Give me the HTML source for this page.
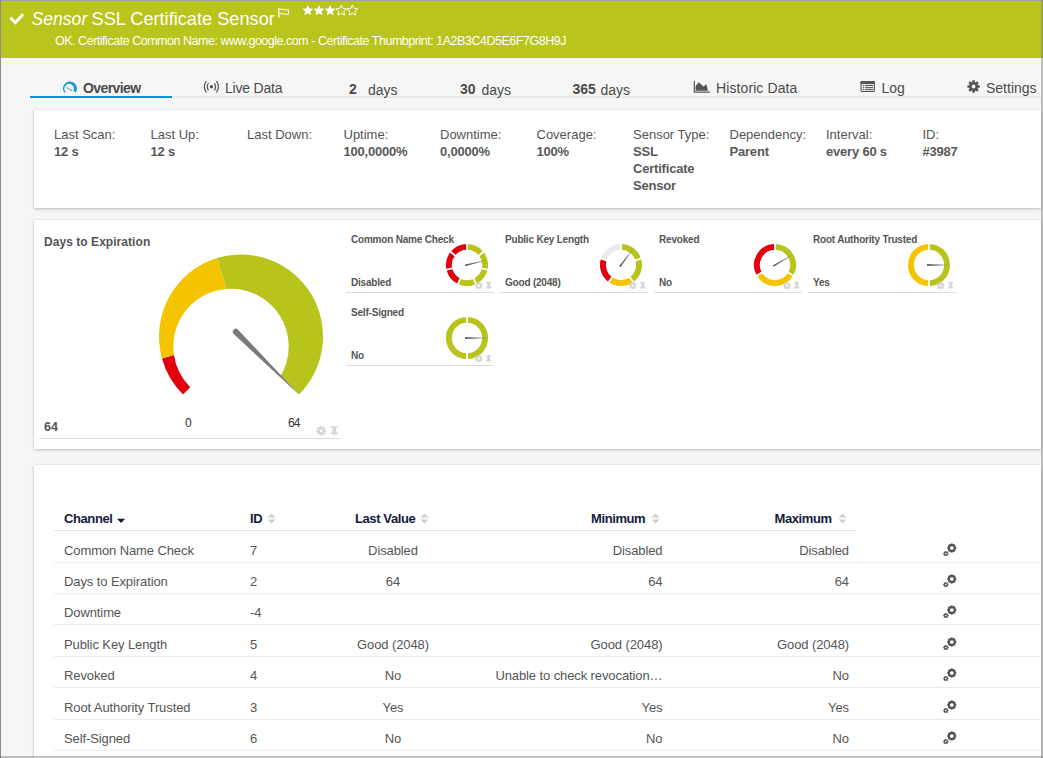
<!DOCTYPE html><html><head><meta charset="utf-8"><style>
*{box-sizing:border-box}
html,body{margin:0;padding:0}
body{width:1043px;height:758px;overflow:hidden;background:#f6f6f6;font-family:"Liberation Sans", sans-serif;position:relative;color:#4d4d4d}
.a{position:absolute;white-space:nowrap}
.panel{position:absolute;left:34px;width:1007px;background:#fff;box-shadow:0 1px 3px rgba(0,0,0,0.22),0 0 1px rgba(0,0,0,0.10)}
.lbl{font-size:13px;color:#555;letter-spacing:0px}
.val{font-size:13px;font-weight:bold;color:#595959;letter-spacing:-0.2px}
.gt{font-size:10px;font-weight:bold;color:#555;letter-spacing:-0.2px}
.th{font-size:13px;font-weight:bold;color:#131a3c;letter-spacing:-0.4px}
.td{font-size:13px;color:#555;letter-spacing:-0.1px}
</style></head><body>

<div class="a" style="left:0;top:0;width:1043px;height:58px;background:#b9c41c"></div>
<svg class="a" style="left:8px;top:11px" width="18" height="16" viewBox="0 0 18 16"><path d="M2.3,6.6 L7.3,11.6 L15.2,3.3" fill="none" stroke="#fff" stroke-width="2.9"/></svg>
<div class="a" style="left:31.5px;top:6px;font-size:17.6px;line-height:26px;color:#fff;font-style:italic">Sensor</div>
<div class="a" style="left:91.5px;top:6px;font-size:18.2px;line-height:26px;color:#fff">SSL Certificate Sensor</div>
<svg class="a" style="left:278px;top:7px" width="13" height="12" viewBox="0 0 13 12"><path d="M0.9,1 V10.7" stroke="#fff" stroke-width="1.3"/><path d="M2,2.3 C5,1.4 6.5,3.6 10.6,2.8 V7 C6.5,8 5,5.8 2,6.8" fill="none" stroke="#fff" stroke-width="1"/></svg>
<svg class="a" style="left:0;top:0" width="400" height="30"><polygon points="307.80,5.00 309.39,8.42 313.13,8.87 310.37,11.43 311.09,15.13 307.80,13.30 304.51,15.13 305.23,11.43 302.47,8.87 306.21,8.42" fill="#fff"/><polygon points="318.95,5.00 320.54,8.42 324.28,8.87 321.52,11.43 322.24,15.13 318.95,13.30 315.66,15.13 316.38,11.43 313.62,8.87 317.36,8.42" fill="#fff"/><polygon points="330.10,5.00 331.69,8.42 335.43,8.87 332.67,11.43 333.39,15.13 330.10,13.30 326.81,15.13 327.53,11.43 324.77,8.87 328.51,8.42" fill="#fff"/><polygon points="341.25,5.00 342.84,8.42 346.58,8.87 343.82,11.43 344.54,15.13 341.25,13.30 337.96,15.13 338.68,11.43 335.92,8.87 339.66,8.42" fill="none" stroke="#fff" stroke-width="1"/><polygon points="352.40,5.00 353.99,8.42 357.73,8.87 354.97,11.43 355.69,15.13 352.40,13.30 349.11,15.13 349.83,11.43 347.07,8.87 350.81,8.42" fill="none" stroke="#fff" stroke-width="1"/></svg>
<div class="a" style="left:55px;top:33.5px;font-size:12.5px;line-height:15px;color:#fff;letter-spacing:-0.475px">OK. Certificate Common Name: www.google.com - Certificate Thumbprint: 1A2B3C4D5E6F7G8H9J</div>
<div class="a" style="left:0;top:0;width:1043px;height:1px;background:#9f9fae;z-index:10"></div>
<div class="a" style="left:0;top:0;width:1px;height:758px;background:#8a8a8a;z-index:10"></div>
<div class="a" style="left:1041px;top:0;width:2px;height:758px;background:rgba(120,120,120,0.45);z-index:10"></div>
<div class="a" style="left:0;top:756px;width:1043px;height:2px;background:rgba(120,120,120,0.45);z-index:10"></div>
<div class="a" style="left:173px;top:96px;width:868px;height:2px;background:#e9e9e9"></div>
<div class="a" style="left:30px;top:96px;width:142px;height:2px;background:#0096d6"></div>
<svg class="a" style="left:61px;top:80px" width="18" height="14" viewBox="0 0 18 14"><path d="M3.48,12.81 A7,7 0 1 1 14.66,12.61 L12.27,10.87 A4.7,4.7 0 1 0 4.65,11.90 Z" fill="#1a9ad6"/><path d="M5.1,7.5 L5.5,6.9 L11.1,10.6 L10.5,11.3 Z" fill="#1a9ad6"/></svg>
<div class="a" style="left:83px;top:80px;font-size:14px;line-height:16px;font-weight:bold;color:#4a4a4a;letter-spacing:-0.6px">Overview</div>
<svg class="a" style="left:203px;top:81px" width="17" height="12" viewBox="0 0 17 12"><circle cx="8.4" cy="5.7" r="1.75" fill="#555"/><path d="M5.5,2.0 A6.6,6.6 0 0 0 5.5,9.4 M11.3,2.0 A6.6,6.6 0 0 1 11.3,9.4" fill="none" stroke="#555" stroke-width="1.15"/><path d="M3.4,-0.1 A10,10 0 0 0 3.4,11.5 M13.4,-0.1 A10,10 0 0 1 13.4,11.5" fill="none" stroke="#555" stroke-width="1.15"/></svg>
<div class="a" style="left:225px;top:80px;font-size:14px;line-height:16px;color:#4a4a4a;letter-spacing:-0.2px">Live Data</div>
<div class="a" style="left:349px;top:81px;font-size:14px;line-height:16px;font-weight:bold;color:#4a4a4a">2</div>
<div class="a" style="left:368px;top:82px;font-size:14px;line-height:16px;color:#4a4a4a">days</div>
<div class="a" style="left:460px;top:81px;font-size:14px;line-height:16px;font-weight:bold;color:#4a4a4a">30</div>
<div class="a" style="left:481.5px;top:82px;font-size:14px;line-height:16px;color:#4a4a4a">days</div>
<div class="a" style="left:572.5px;top:81px;font-size:14px;line-height:16px;font-weight:bold;color:#4a4a4a">365</div>
<div class="a" style="left:600.5px;top:82px;font-size:14px;line-height:16px;color:#4a4a4a">days</div>
<svg class="a" style="left:693px;top:81px" width="17" height="12" viewBox="0 0 17 12"><path d="M1.3,0 V11.2 H16.8" fill="none" stroke="#555" stroke-width="1.2"/><path d="M2.6,9.8 V5 L5.8,1.3 L10.4,5.6 L13.4,3.2 L15,9.8 Z" fill="#555"/></svg>
<div class="a" style="left:716px;top:80px;font-size:14px;line-height:16px;color:#4a4a4a;letter-spacing:0.1px">Historic Data</div>
<svg class="a" style="left:860px;top:81px" width="16" height="12" viewBox="0 0 16 12"><rect x="1.05" y="0.55" width="13.3" height="9.9" rx="1" fill="#e4e4e4" stroke="#555" stroke-width="1.1"/><rect x="0.5" y="0" width="14.4" height="3" rx="1" fill="#555"/><path d="M2.9,4.5 h1.2 M2.9,6.6 h1.2 M2.9,8.6 h1.2 M5.1,4.5 h7.8 M5.1,6.6 h7.8 M5.1,8.6 h7.8" stroke="#555" stroke-width="1"/></svg>
<div class="a" style="left:881.5px;top:80px;font-size:14px;line-height:16px;color:#4a4a4a">Log</div>
<svg class="a" style="left:967.1px;top:80.2px" width="14" height="14" viewBox="0 0 14 14"><g fill="#555"><circle cx="6.6" cy="6.5" r="4.5"/><rect x="5.3" y="0.3" width="2.6" height="12.4" rx="0.4" transform="rotate(0 6.6 6.5)"/><rect x="5.3" y="0.3" width="2.6" height="12.4" rx="0.4" transform="rotate(45 6.6 6.5)"/><rect x="5.3" y="0.3" width="2.6" height="12.4" rx="0.4" transform="rotate(90 6.6 6.5)"/><rect x="5.3" y="0.3" width="2.6" height="12.4" rx="0.4" transform="rotate(135 6.6 6.5)"/></g><circle cx="6.6" cy="6.5" r="1.9" fill="#f6f6f6"/></svg>
<div class="a" style="left:986px;top:80px;font-size:14px;line-height:16px;color:#4a4a4a">Settings</div>
<div class="panel" style="top:110px;height:98px"></div>
<div class="a lbl" style="left:54px;top:126px;line-height:17px">Last Scan:</div>
<div class="a val" style="left:54px;top:143px;line-height:17px">12 s</div>
<div class="a lbl" style="left:150.5px;top:126px;line-height:17px">Last Up:</div>
<div class="a val" style="left:150.5px;top:143px;line-height:17px">12 s</div>
<div class="a lbl" style="left:247px;top:126px;line-height:17px">Last Down:</div>
<div class="a lbl" style="left:343.5px;top:126px;line-height:17px">Uptime:</div>
<div class="a val" style="left:343.5px;top:143px;line-height:17px">100,0000%</div>
<div class="a lbl" style="left:440px;top:126px;line-height:17px">Downtime:</div>
<div class="a val" style="left:440px;top:143px;line-height:17px">0,0000%</div>
<div class="a lbl" style="left:536.5px;top:126px;line-height:17px">Coverage:</div>
<div class="a val" style="left:536.5px;top:143px;line-height:17px">100%</div>
<div class="a lbl" style="left:633px;top:126px;line-height:17px">Sensor Type:</div>
<div class="a val" style="left:633px;top:143px;line-height:17px">SSL</div>
<div class="a val" style="left:633px;top:160px;line-height:17px">Certificate</div>
<div class="a val" style="left:633px;top:177px;line-height:17px">Sensor</div>
<div class="a lbl" style="left:729.5px;top:126px;line-height:17px">Dependency:</div>
<div class="a val" style="left:729.5px;top:143px;line-height:17px">Parent</div>
<div class="a lbl" style="left:826px;top:126px;line-height:17px">Interval:</div>
<div class="a val" style="left:826px;top:143px;line-height:17px">every 60 s</div>
<div class="a lbl" style="left:922.5px;top:126px;line-height:17px">ID:</div>
<div class="a val" style="left:922.5px;top:143px;line-height:17px">#3987</div>
<div class="panel" style="top:220px;height:229px"></div>
<div class="a" style="left:44px;top:234px;font-size:12px;line-height:16px;font-weight:bold;color:#555;letter-spacing:0.05px">Days to Expiration</div>
<svg class="a" style="left:0;top:0" width="360" height="450"><path d="M183.02,394.48 A82,82 0 0 1 161.98,358.41 L173.94,355.10 A57.7,57.7 0 0 0 190.20,387.30 Z" fill="#e2000f"/><path d="M161.98,358.41 A82,82 0 0 1 217.16,258.04 L226.56,288.97 A57.7,57.7 0 0 0 173.94,355.10 Z" fill="#f5c400"/><path d="M217.16,258.04 A82,82 0 0 1 298.98,394.48 L280.56,376.06 A57.7,57.7 0 0 0 226.56,288.97 Z" fill="#b8c41c"/><path d="M233.7,334.1 A3.1,3.1 0 0 1 238.1,329.7 L299.4,394.9 Z" fill="#7a7a7a"/></svg>
<div class="a" style="left:185px;top:415.5px;font-size:12px;line-height:14px;color:#333">0</div>
<div class="a" style="left:288px;top:415.5px;font-size:12px;line-height:14px;color:#333;letter-spacing:-0.8px">64</div>
<div class="a" style="left:44px;top:420px;font-size:12.5px;line-height:14px;font-weight:bold;color:#555">64</div>
<svg class="a" style="left:0;top:0;overflow:visible" width="1" height="1"><g transform="translate(321.3,430.8) scale(1.0)" fill="#d6d6d6"><circle r="3.7"/><rect x="-1.1" y="-5" width="2.2" height="10" transform="rotate(0)"/><rect x="-1.1" y="-5" width="2.2" height="10" transform="rotate(45)"/><rect x="-1.1" y="-5" width="2.2" height="10" transform="rotate(90)"/><rect x="-1.1" y="-5" width="2.2" height="10" transform="rotate(135)"/><circle r="1.5" fill="#fff"/><path d="M9.2,-4.6 h7 v1.6 h-1.4 v3.6 l1.7,1.8 v1.0 h-2.9 l-0.6,3.5 l-0.6,-3.5 h-2.9 v-1.0 l1.7,-1.8 v-3.6 h-1.4z"/></g></svg>
<div class="a" style="left:39px;top:438px;width:301px;height:1px;background:#dcdcdc"></div>
<div class="a gt" style="left:351px;top:234px;line-height:12px">Common Name Check</div>
<div class="a gt" style="left:351px;top:277px;line-height:12px">Disabled</div>
<div class="a" style="left:346px;top:292px;width:148px;height:1px;background:#dcdcdc"></div>
<div class="a gt" style="left:505px;top:234px;line-height:12px">Public Key Length</div>
<div class="a gt" style="left:505px;top:277px;line-height:12px">Good (2048)</div>
<div class="a" style="left:500px;top:292px;width:148px;height:1px;background:#dcdcdc"></div>
<div class="a gt" style="left:659px;top:234px;line-height:12px">Revoked</div>
<div class="a gt" style="left:659px;top:277px;line-height:12px">No</div>
<div class="a" style="left:654px;top:292px;width:148px;height:1px;background:#dcdcdc"></div>
<div class="a gt" style="left:813px;top:234px;line-height:12px">Root Authority Trusted</div>
<div class="a gt" style="left:813px;top:277px;line-height:12px">Yes</div>
<div class="a" style="left:808px;top:292px;width:148px;height:1px;background:#dcdcdc"></div>
<div class="a gt" style="left:351px;top:307px;line-height:12px">Self-Signed</div>
<div class="a gt" style="left:351px;top:350px;line-height:12px">No</div>
<div class="a" style="left:346px;top:365px;width:148px;height:1px;background:#dcdcdc"></div>
<svg class="a" style="left:0;top:0" width="1043" height="450"><path d="M467.00,246.90 A18.1,18.1 0 0 1 481.15,253.71" fill="none" stroke="#b8c41c" stroke-width="5.9"/><path d="M481.15,253.71 A18.1,18.1 0 0 1 484.65,269.03" fill="none" stroke="#b8c41c" stroke-width="5.9"/><path d="M484.65,269.03 A18.1,18.1 0 0 1 474.85,281.31" fill="none" stroke="#b8c41c" stroke-width="5.9"/><path d="M474.85,281.31 A18.1,18.1 0 0 1 459.15,281.31" fill="none" stroke="#b8c41c" stroke-width="5.9"/><path d="M459.15,281.31 A18.1,18.1 0 0 1 449.35,269.03" fill="none" stroke="#e2000f" stroke-width="5.9"/><path d="M449.35,269.03 A18.1,18.1 0 0 1 452.85,253.71" fill="none" stroke="#e2000f" stroke-width="5.9"/><path d="M452.85,253.71 A18.1,18.1 0 0 1 467.00,246.90" fill="none" stroke="#e2000f" stroke-width="5.9"/><line x1="467.00" y1="253.00" x2="467.00" y2="241.00" stroke="#fff" stroke-width="1.8"/><line x1="476.38" y1="257.52" x2="485.76" y2="250.04" stroke="#fff" stroke-width="1.8"/><line x1="478.70" y1="267.67" x2="490.40" y2="270.34" stroke="#fff" stroke-width="1.8"/><line x1="472.21" y1="275.81" x2="477.41" y2="286.62" stroke="#fff" stroke-width="1.8"/><line x1="461.79" y1="275.81" x2="456.59" y2="286.62" stroke="#fff" stroke-width="1.8"/><line x1="455.30" y1="267.67" x2="443.60" y2="270.34" stroke="#fff" stroke-width="1.8"/><line x1="457.62" y1="257.52" x2="448.24" y2="250.04" stroke="#fff" stroke-width="1.8"/><path d="M465.28,266.36 L487.38,259.92 L464.84,264.61 Z" fill="#666"/><path d="M621.00,246.90 A18.1,18.1 0 0 1 638.21,259.41" fill="none" stroke="#b8c41c" stroke-width="5.9"/><path d="M638.21,259.41 A18.1,18.1 0 0 1 631.64,279.64" fill="none" stroke="#b8c41c" stroke-width="5.9"/><path d="M631.64,279.64 A18.1,18.1 0 0 1 610.36,279.64" fill="none" stroke="#f5c400" stroke-width="5.9"/><path d="M610.36,279.64 A18.1,18.1 0 0 1 603.79,259.41" fill="none" stroke="#e2000f" stroke-width="5.9"/><path d="M603.79,259.41 A18.1,18.1 0 0 1 621.00,246.90" fill="none" stroke="#ebebeb" stroke-width="5.9"/><line x1="621.00" y1="253.00" x2="621.00" y2="241.00" stroke="#fff" stroke-width="1.8"/><line x1="632.41" y1="261.29" x2="643.83" y2="257.58" stroke="#fff" stroke-width="1.8"/><line x1="628.05" y1="274.71" x2="635.11" y2="284.42" stroke="#fff" stroke-width="1.8"/><line x1="613.95" y1="274.71" x2="606.89" y2="284.42" stroke="#fff" stroke-width="1.8"/><line x1="609.59" y1="261.29" x2="598.17" y2="257.58" stroke="#fff" stroke-width="1.8"/><path d="M620.52,267.14 L633.64,248.23 L619.08,266.06 Z" fill="#666"/><path d="M775.00,246.90 A18.1,18.1 0 0 1 790.68,274.05" fill="none" stroke="#b8c41c" stroke-width="5.9"/><path d="M790.68,274.05 A18.1,18.1 0 0 1 759.32,274.05" fill="none" stroke="#f5c400" stroke-width="5.9"/><path d="M759.32,274.05 A18.1,18.1 0 0 1 775.00,246.90" fill="none" stroke="#e2000f" stroke-width="5.9"/><line x1="775.00" y1="253.00" x2="775.00" y2="241.00" stroke="#fff" stroke-width="1.8"/><line x1="785.39" y1="271.00" x2="795.78" y2="277.00" stroke="#fff" stroke-width="1.8"/><line x1="764.61" y1="271.00" x2="754.22" y2="277.00" stroke="#fff" stroke-width="1.8"/><path d="M773.72,266.78 L793.19,254.50 L772.82,265.22 Z" fill="#666"/><path d="M929.00,246.90 A18.1,18.1 0 0 1 929.00,283.10" fill="none" stroke="#b8c41c" stroke-width="5.9"/><path d="M929.00,283.10 A18.1,18.1 0 0 1 929.00,246.90" fill="none" stroke="#f5c400" stroke-width="5.9"/><line x1="929.00" y1="253.00" x2="929.00" y2="241.00" stroke="#fff" stroke-width="1.8"/><line x1="929.00" y1="277.00" x2="929.00" y2="289.00" stroke="#fff" stroke-width="1.8"/><path d="M927.00,265.90 L950.00,265.00 L927.00,264.10 Z" fill="#666"/><path d="M467.00,319.90 A18.1,18.1 0 0 1 467.00,356.10" fill="none" stroke="#b8c41c" stroke-width="5.9"/><path d="M467.00,356.10 A18.1,18.1 0 0 1 467.00,319.90" fill="none" stroke="#b8c41c" stroke-width="5.9"/><line x1="467.00" y1="326.00" x2="467.00" y2="314.00" stroke="#fff" stroke-width="1.8"/><line x1="467.00" y1="350.00" x2="467.00" y2="362.00" stroke="#fff" stroke-width="1.8"/><path d="M465.00,338.90 L488.00,338.00 L465.00,337.10 Z" fill="#666"/></svg>
<svg class="a" style="left:0;top:0;overflow:visible" width="1" height="1"><g transform="translate(478.8,285.6) scale(0.76)" fill="#d6d6d6"><circle r="3.7"/><rect x="-1.1" y="-5" width="2.2" height="10" transform="rotate(0)"/><rect x="-1.1" y="-5" width="2.2" height="10" transform="rotate(45)"/><rect x="-1.1" y="-5" width="2.2" height="10" transform="rotate(90)"/><rect x="-1.1" y="-5" width="2.2" height="10" transform="rotate(135)"/><circle r="1.5" fill="#fff"/><path d="M9.2,-4.6 h7 v1.6 h-1.4 v3.6 l1.7,1.8 v1.0 h-2.9 l-0.6,3.5 l-0.6,-3.5 h-2.9 v-1.0 l1.7,-1.8 v-3.6 h-1.4z"/></g></svg>
<svg class="a" style="left:0;top:0;overflow:visible" width="1" height="1"><g transform="translate(632.8,285.6) scale(0.76)" fill="#d6d6d6"><circle r="3.7"/><rect x="-1.1" y="-5" width="2.2" height="10" transform="rotate(0)"/><rect x="-1.1" y="-5" width="2.2" height="10" transform="rotate(45)"/><rect x="-1.1" y="-5" width="2.2" height="10" transform="rotate(90)"/><rect x="-1.1" y="-5" width="2.2" height="10" transform="rotate(135)"/><circle r="1.5" fill="#fff"/><path d="M9.2,-4.6 h7 v1.6 h-1.4 v3.6 l1.7,1.8 v1.0 h-2.9 l-0.6,3.5 l-0.6,-3.5 h-2.9 v-1.0 l1.7,-1.8 v-3.6 h-1.4z"/></g></svg>
<svg class="a" style="left:0;top:0;overflow:visible" width="1" height="1"><g transform="translate(786.8,285.6) scale(0.76)" fill="#d6d6d6"><circle r="3.7"/><rect x="-1.1" y="-5" width="2.2" height="10" transform="rotate(0)"/><rect x="-1.1" y="-5" width="2.2" height="10" transform="rotate(45)"/><rect x="-1.1" y="-5" width="2.2" height="10" transform="rotate(90)"/><rect x="-1.1" y="-5" width="2.2" height="10" transform="rotate(135)"/><circle r="1.5" fill="#fff"/><path d="M9.2,-4.6 h7 v1.6 h-1.4 v3.6 l1.7,1.8 v1.0 h-2.9 l-0.6,3.5 l-0.6,-3.5 h-2.9 v-1.0 l1.7,-1.8 v-3.6 h-1.4z"/></g></svg>
<svg class="a" style="left:0;top:0;overflow:visible" width="1" height="1"><g transform="translate(940.8,285.6) scale(0.76)" fill="#d6d6d6"><circle r="3.7"/><rect x="-1.1" y="-5" width="2.2" height="10" transform="rotate(0)"/><rect x="-1.1" y="-5" width="2.2" height="10" transform="rotate(45)"/><rect x="-1.1" y="-5" width="2.2" height="10" transform="rotate(90)"/><rect x="-1.1" y="-5" width="2.2" height="10" transform="rotate(135)"/><circle r="1.5" fill="#fff"/><path d="M9.2,-4.6 h7 v1.6 h-1.4 v3.6 l1.7,1.8 v1.0 h-2.9 l-0.6,3.5 l-0.6,-3.5 h-2.9 v-1.0 l1.7,-1.8 v-3.6 h-1.4z"/></g></svg>
<svg class="a" style="left:0;top:0;overflow:visible" width="1" height="1"><g transform="translate(478.8,358.6) scale(0.76)" fill="#d6d6d6"><circle r="3.7"/><rect x="-1.1" y="-5" width="2.2" height="10" transform="rotate(0)"/><rect x="-1.1" y="-5" width="2.2" height="10" transform="rotate(45)"/><rect x="-1.1" y="-5" width="2.2" height="10" transform="rotate(90)"/><rect x="-1.1" y="-5" width="2.2" height="10" transform="rotate(135)"/><circle r="1.5" fill="#fff"/><path d="M9.2,-4.6 h7 v1.6 h-1.4 v3.6 l1.7,1.8 v1.0 h-2.9 l-0.6,3.5 l-0.6,-3.5 h-2.9 v-1.0 l1.7,-1.8 v-3.6 h-1.4z"/></g></svg>
<div class="panel" style="top:465px;height:300px"></div>
<div class="a" style="left:54px;top:530px;width:803px;height:1px;background:#e6e6e6"></div>
<div class="a th" style="left:64px;top:510.5px;line-height:16px">Channel</div>
<svg class="a" style="left:117px;top:518px" width="9" height="6" viewBox="0 0 9 6"><path d="M0,0.8 H8.2 L4.1,5.0Z" fill="#131a3c"/></svg>
<div class="a th" style="left:250px;top:510.5px;line-height:16px">ID</div>
<svg class="a" style="left:267px;top:513px" width="9" height="11" viewBox="0 0 9 11"><path d="M0.5,4.5 L4.5,0.5 L8.5,4.5Z M0.5,6.5 L4.5,10.5 L8.5,6.5Z" fill="#cfcfcf"/></svg>
<div class="a th" style="left:355px;top:510.5px;line-height:16px">Last Value</div>
<svg class="a" style="left:420px;top:513px" width="9" height="11" viewBox="0 0 9 11"><path d="M0.5,4.5 L4.5,0.5 L8.5,4.5Z M0.5,6.5 L4.5,10.5 L8.5,6.5Z" fill="#cfcfcf"/></svg>
<div class="a th" style="left:591px;top:510.5px;line-height:16px">Minimum</div>
<svg class="a" style="left:651px;top:513px" width="9" height="11" viewBox="0 0 9 11"><path d="M0.5,4.5 L4.5,0.5 L8.5,4.5Z M0.5,6.5 L4.5,10.5 L8.5,6.5Z" fill="#cfcfcf"/></svg>
<div class="a th" style="left:774.5px;top:510.5px;line-height:16px">Maximum</div>
<svg class="a" style="left:837.5px;top:513px" width="9" height="11" viewBox="0 0 9 11"><path d="M0.5,4.5 L4.5,0.5 L8.5,4.5Z M0.5,6.5 L4.5,10.5 L8.5,6.5Z" fill="#cfcfcf"/></svg>
<div class="a" style="left:54px;top:562px;width:987px;height:1px;background:#ececec"></div>
<div class="a td" style="left:64px;top:543px;line-height:16px">Common Name Check</div>
<div class="a td" style="left:250px;top:543px;line-height:16px">7</div>
<div class="a td" style="left:293px;width:200px;text-align:center;top:543px;line-height:16px">Disabled</div>
<div class="a td" style="left:462.5px;width:200px;text-align:right;top:543px;line-height:16px">Disabled</div>
<div class="a td" style="left:649px;width:200px;text-align:right;top:543px;line-height:16px">Disabled</div>
<svg class="a" style="left:943px;top:543px" width="14" height="13" viewBox="0 0 14 13"><circle cx="8.8" cy="5" r="3.1" fill="none" stroke="#555" stroke-width="2.2"/><rect x="8.1" y="0.4" width="1.4" height="9.2" fill="#555" transform="rotate(0 8.8 5)"/><rect x="8.1" y="0.4" width="1.4" height="9.2" fill="#555" transform="rotate(45 8.8 5)"/><rect x="8.1" y="0.4" width="1.4" height="9.2" fill="#555" transform="rotate(90 8.8 5)"/><rect x="8.1" y="0.4" width="1.4" height="9.2" fill="#555" transform="rotate(135 8.8 5)"/><circle cx="8.8" cy="5" r="1.85" fill="#fff"/><circle cx="2.8" cy="10.6" r="1.9" fill="#555"/><rect x="2.25" y="7.9" width="1.1" height="5.4" fill="#555" transform="rotate(0 2.8 10.6)"/><rect x="2.25" y="7.9" width="1.1" height="5.4" fill="#555" transform="rotate(45 2.8 10.6)"/><rect x="2.25" y="7.9" width="1.1" height="5.4" fill="#555" transform="rotate(90 2.8 10.6)"/><rect x="2.25" y="7.9" width="1.1" height="5.4" fill="#555" transform="rotate(135 2.8 10.6)"/><circle cx="2.8" cy="10.6" r="0.8" fill="#fff"/></svg>
<div class="a" style="left:54px;top:593px;width:987px;height:1px;background:#ececec"></div>
<div class="a td" style="left:64px;top:574px;line-height:16px">Days to Expiration</div>
<div class="a td" style="left:250px;top:574px;line-height:16px">2</div>
<div class="a td" style="left:293px;width:200px;text-align:center;top:574px;line-height:16px">64</div>
<div class="a td" style="left:462.5px;width:200px;text-align:right;top:574px;line-height:16px">64</div>
<div class="a td" style="left:649px;width:200px;text-align:right;top:574px;line-height:16px">64</div>
<svg class="a" style="left:943px;top:574px" width="14" height="13" viewBox="0 0 14 13"><circle cx="8.8" cy="5" r="3.1" fill="none" stroke="#555" stroke-width="2.2"/><rect x="8.1" y="0.4" width="1.4" height="9.2" fill="#555" transform="rotate(0 8.8 5)"/><rect x="8.1" y="0.4" width="1.4" height="9.2" fill="#555" transform="rotate(45 8.8 5)"/><rect x="8.1" y="0.4" width="1.4" height="9.2" fill="#555" transform="rotate(90 8.8 5)"/><rect x="8.1" y="0.4" width="1.4" height="9.2" fill="#555" transform="rotate(135 8.8 5)"/><circle cx="8.8" cy="5" r="1.85" fill="#fff"/><circle cx="2.8" cy="10.6" r="1.9" fill="#555"/><rect x="2.25" y="7.9" width="1.1" height="5.4" fill="#555" transform="rotate(0 2.8 10.6)"/><rect x="2.25" y="7.9" width="1.1" height="5.4" fill="#555" transform="rotate(45 2.8 10.6)"/><rect x="2.25" y="7.9" width="1.1" height="5.4" fill="#555" transform="rotate(90 2.8 10.6)"/><rect x="2.25" y="7.9" width="1.1" height="5.4" fill="#555" transform="rotate(135 2.8 10.6)"/><circle cx="2.8" cy="10.6" r="0.8" fill="#fff"/></svg>
<div class="a" style="left:54px;top:624px;width:987px;height:1px;background:#ececec"></div>
<div class="a td" style="left:64px;top:605px;line-height:16px">Downtime</div>
<div class="a td" style="left:250px;top:605px;line-height:16px">-4</div>
<div class="a td" style="left:293px;width:200px;text-align:center;top:605px;line-height:16px"></div>
<div class="a td" style="left:462.5px;width:200px;text-align:right;top:605px;line-height:16px"></div>
<div class="a td" style="left:649px;width:200px;text-align:right;top:605px;line-height:16px"></div>
<svg class="a" style="left:943px;top:605px" width="14" height="13" viewBox="0 0 14 13"><circle cx="8.8" cy="5" r="3.1" fill="none" stroke="#555" stroke-width="2.2"/><rect x="8.1" y="0.4" width="1.4" height="9.2" fill="#555" transform="rotate(0 8.8 5)"/><rect x="8.1" y="0.4" width="1.4" height="9.2" fill="#555" transform="rotate(45 8.8 5)"/><rect x="8.1" y="0.4" width="1.4" height="9.2" fill="#555" transform="rotate(90 8.8 5)"/><rect x="8.1" y="0.4" width="1.4" height="9.2" fill="#555" transform="rotate(135 8.8 5)"/><circle cx="8.8" cy="5" r="1.85" fill="#fff"/><circle cx="2.8" cy="10.6" r="1.9" fill="#555"/><rect x="2.25" y="7.9" width="1.1" height="5.4" fill="#555" transform="rotate(0 2.8 10.6)"/><rect x="2.25" y="7.9" width="1.1" height="5.4" fill="#555" transform="rotate(45 2.8 10.6)"/><rect x="2.25" y="7.9" width="1.1" height="5.4" fill="#555" transform="rotate(90 2.8 10.6)"/><rect x="2.25" y="7.9" width="1.1" height="5.4" fill="#555" transform="rotate(135 2.8 10.6)"/><circle cx="2.8" cy="10.6" r="0.8" fill="#fff"/></svg>
<div class="a" style="left:54px;top:656px;width:987px;height:1px;background:#ececec"></div>
<div class="a td" style="left:64px;top:637px;line-height:16px">Public Key Length</div>
<div class="a td" style="left:250px;top:637px;line-height:16px">5</div>
<div class="a td" style="left:293px;width:200px;text-align:center;top:637px;line-height:16px">Good (2048)</div>
<div class="a td" style="left:462.5px;width:200px;text-align:right;top:637px;line-height:16px">Good (2048)</div>
<div class="a td" style="left:649px;width:200px;text-align:right;top:637px;line-height:16px">Good (2048)</div>
<svg class="a" style="left:943px;top:637px" width="14" height="13" viewBox="0 0 14 13"><circle cx="8.8" cy="5" r="3.1" fill="none" stroke="#555" stroke-width="2.2"/><rect x="8.1" y="0.4" width="1.4" height="9.2" fill="#555" transform="rotate(0 8.8 5)"/><rect x="8.1" y="0.4" width="1.4" height="9.2" fill="#555" transform="rotate(45 8.8 5)"/><rect x="8.1" y="0.4" width="1.4" height="9.2" fill="#555" transform="rotate(90 8.8 5)"/><rect x="8.1" y="0.4" width="1.4" height="9.2" fill="#555" transform="rotate(135 8.8 5)"/><circle cx="8.8" cy="5" r="1.85" fill="#fff"/><circle cx="2.8" cy="10.6" r="1.9" fill="#555"/><rect x="2.25" y="7.9" width="1.1" height="5.4" fill="#555" transform="rotate(0 2.8 10.6)"/><rect x="2.25" y="7.9" width="1.1" height="5.4" fill="#555" transform="rotate(45 2.8 10.6)"/><rect x="2.25" y="7.9" width="1.1" height="5.4" fill="#555" transform="rotate(90 2.8 10.6)"/><rect x="2.25" y="7.9" width="1.1" height="5.4" fill="#555" transform="rotate(135 2.8 10.6)"/><circle cx="2.8" cy="10.6" r="0.8" fill="#fff"/></svg>
<div class="a" style="left:54px;top:687px;width:987px;height:1px;background:#ececec"></div>
<div class="a td" style="left:64px;top:668px;line-height:16px">Revoked</div>
<div class="a td" style="left:250px;top:668px;line-height:16px">4</div>
<div class="a td" style="left:293px;width:200px;text-align:center;top:668px;line-height:16px">No</div>
<div class="a td" style="left:462.5px;width:200px;text-align:right;top:668px;line-height:16px">Unable to check revocation…</div>
<div class="a td" style="left:649px;width:200px;text-align:right;top:668px;line-height:16px">No</div>
<svg class="a" style="left:943px;top:668px" width="14" height="13" viewBox="0 0 14 13"><circle cx="8.8" cy="5" r="3.1" fill="none" stroke="#555" stroke-width="2.2"/><rect x="8.1" y="0.4" width="1.4" height="9.2" fill="#555" transform="rotate(0 8.8 5)"/><rect x="8.1" y="0.4" width="1.4" height="9.2" fill="#555" transform="rotate(45 8.8 5)"/><rect x="8.1" y="0.4" width="1.4" height="9.2" fill="#555" transform="rotate(90 8.8 5)"/><rect x="8.1" y="0.4" width="1.4" height="9.2" fill="#555" transform="rotate(135 8.8 5)"/><circle cx="8.8" cy="5" r="1.85" fill="#fff"/><circle cx="2.8" cy="10.6" r="1.9" fill="#555"/><rect x="2.25" y="7.9" width="1.1" height="5.4" fill="#555" transform="rotate(0 2.8 10.6)"/><rect x="2.25" y="7.9" width="1.1" height="5.4" fill="#555" transform="rotate(45 2.8 10.6)"/><rect x="2.25" y="7.9" width="1.1" height="5.4" fill="#555" transform="rotate(90 2.8 10.6)"/><rect x="2.25" y="7.9" width="1.1" height="5.4" fill="#555" transform="rotate(135 2.8 10.6)"/><circle cx="2.8" cy="10.6" r="0.8" fill="#fff"/></svg>
<div class="a" style="left:54px;top:719px;width:987px;height:1px;background:#ececec"></div>
<div class="a td" style="left:64px;top:700px;line-height:16px">Root Authority Trusted</div>
<div class="a td" style="left:250px;top:700px;line-height:16px">3</div>
<div class="a td" style="left:293px;width:200px;text-align:center;top:700px;line-height:16px">Yes</div>
<div class="a td" style="left:462.5px;width:200px;text-align:right;top:700px;line-height:16px">Yes</div>
<div class="a td" style="left:649px;width:200px;text-align:right;top:700px;line-height:16px">Yes</div>
<svg class="a" style="left:943px;top:700px" width="14" height="13" viewBox="0 0 14 13"><circle cx="8.8" cy="5" r="3.1" fill="none" stroke="#555" stroke-width="2.2"/><rect x="8.1" y="0.4" width="1.4" height="9.2" fill="#555" transform="rotate(0 8.8 5)"/><rect x="8.1" y="0.4" width="1.4" height="9.2" fill="#555" transform="rotate(45 8.8 5)"/><rect x="8.1" y="0.4" width="1.4" height="9.2" fill="#555" transform="rotate(90 8.8 5)"/><rect x="8.1" y="0.4" width="1.4" height="9.2" fill="#555" transform="rotate(135 8.8 5)"/><circle cx="8.8" cy="5" r="1.85" fill="#fff"/><circle cx="2.8" cy="10.6" r="1.9" fill="#555"/><rect x="2.25" y="7.9" width="1.1" height="5.4" fill="#555" transform="rotate(0 2.8 10.6)"/><rect x="2.25" y="7.9" width="1.1" height="5.4" fill="#555" transform="rotate(45 2.8 10.6)"/><rect x="2.25" y="7.9" width="1.1" height="5.4" fill="#555" transform="rotate(90 2.8 10.6)"/><rect x="2.25" y="7.9" width="1.1" height="5.4" fill="#555" transform="rotate(135 2.8 10.6)"/><circle cx="2.8" cy="10.6" r="0.8" fill="#fff"/></svg>
<div class="a" style="left:54px;top:750px;width:987px;height:1px;background:#ececec"></div>
<div class="a td" style="left:64px;top:731px;line-height:16px">Self-Signed</div>
<div class="a td" style="left:250px;top:731px;line-height:16px">6</div>
<div class="a td" style="left:293px;width:200px;text-align:center;top:731px;line-height:16px">No</div>
<div class="a td" style="left:462.5px;width:200px;text-align:right;top:731px;line-height:16px">No</div>
<div class="a td" style="left:649px;width:200px;text-align:right;top:731px;line-height:16px">No</div>
<svg class="a" style="left:943px;top:731px" width="14" height="13" viewBox="0 0 14 13"><circle cx="8.8" cy="5" r="3.1" fill="none" stroke="#555" stroke-width="2.2"/><rect x="8.1" y="0.4" width="1.4" height="9.2" fill="#555" transform="rotate(0 8.8 5)"/><rect x="8.1" y="0.4" width="1.4" height="9.2" fill="#555" transform="rotate(45 8.8 5)"/><rect x="8.1" y="0.4" width="1.4" height="9.2" fill="#555" transform="rotate(90 8.8 5)"/><rect x="8.1" y="0.4" width="1.4" height="9.2" fill="#555" transform="rotate(135 8.8 5)"/><circle cx="8.8" cy="5" r="1.85" fill="#fff"/><circle cx="2.8" cy="10.6" r="1.9" fill="#555"/><rect x="2.25" y="7.9" width="1.1" height="5.4" fill="#555" transform="rotate(0 2.8 10.6)"/><rect x="2.25" y="7.9" width="1.1" height="5.4" fill="#555" transform="rotate(45 2.8 10.6)"/><rect x="2.25" y="7.9" width="1.1" height="5.4" fill="#555" transform="rotate(90 2.8 10.6)"/><rect x="2.25" y="7.9" width="1.1" height="5.4" fill="#555" transform="rotate(135 2.8 10.6)"/><circle cx="2.8" cy="10.6" r="0.8" fill="#fff"/></svg>
</body></html>
